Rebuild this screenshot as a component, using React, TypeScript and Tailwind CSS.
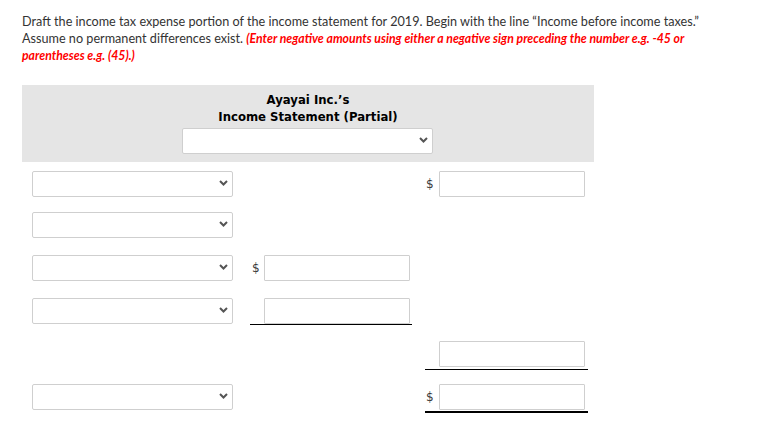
import React from "react";

function Chevron() {
  return (
    <svg width="9" height="6" viewBox="0 0 9 6" className="absolute right-[4px] top-[8px]">
      <polyline points="1,1 4.5,4.5 8,1" fill="none" stroke="#555" strokeWidth="2" />
    </svg>
  );
}

function Select({ w }: { w: string }) {
  return (
    <div className={`relative ${w} h-[26px] border border-[#cfcfcf] bg-white rounded-[2px]`}>
      <Chevron />
    </div>
  );
}

function Input() {
  return <div className="w-[146px] h-[26px] border border-[#cfcfcf] bg-white rounded-[1px]" />;
}

function Dollar({ w }: { w: string }) {
  return (
    <span className={`${w} text-[12px] leading-[26px] text-[#3a3a3a]`} style={{ fontFamily: '"DejaVu Sans", sans-serif' }}>
      $
    </span>
  );
}

export default function App() {
  return (
    <div className="w-[758px] h-[441px] bg-white overflow-hidden" style={{ fontFamily: 'Lato, "Open Sans", sans-serif' }}>
      <div className="pl-[22px] pt-[13px] text-[12.65px] leading-[17px] text-[#333] whitespace-nowrap">
        Draft the income tax expense portion of the income statement for 2019. Begin with the line “Income before income taxes.”
        <br />
        Assume no permanent differences exist.{" "}
        <span className="text-[#f00] font-bold italic text-[12.25px]">
          (Enter negative amounts using either a negative sign preceding the number e.g. -45 or
          <br />
          parentheses e.g. (45).)
        </span>
      </div>

      <div className="ml-[22px] mt-[21px] w-[572px]">
        <div
          className="bg-[#e5e5e5] h-[77px] pt-[7px] flex flex-col items-center text-black font-bold text-[11.7px] leading-[17px]"
          style={{ fontFamily: '"DejaVu Sans", sans-serif' }}
        >
          <div>Ayayai Inc.’s</div>
          <div>Income Statement (Partial)</div>
          <div className="mt-[2px] ml-[-1px]">
            <Select w="w-[251px]" />
          </div>
        </div>

        {/* Row 1 */}
        <div className="flex h-[50px] pt-[9px]">
          <div className="w-[228px] pl-[10px]"><Select w="w-[201px]" /></div>
          <div className="w-[164px]" />
          <div className="ml-[11px] w-[163px] flex pl-[1px]"><Dollar w="w-[13px]" /><Input /></div>
        </div>
        {/* Row 2 */}
        <div className="flex h-[43px]">
          <div className="w-[228px] pl-[10px]"><Select w="w-[201px]" /></div>
        </div>
        {/* Row 3 */}
        <div className="flex h-[43px]">
          <div className="w-[228px] pl-[10px]"><Select w="w-[201px]" /></div>
          <div className="w-[162px] flex pl-[2px]"><Dollar w="w-[12px]" /><Input /></div>
        </div>
        {/* Row 4 */}
        <div className="flex h-[43px]">
          <div className="w-[228px] pl-[10px]"><Select w="w-[201px]" /></div>
          <div className="w-[162px] h-[27px] flex pl-[14px] border-b border-black"><Input /></div>
        </div>
        {/* Row 5 */}
        <div className="flex h-[43px]">
          <div className="w-[228px]" />
          <div className="w-[164px]" />
          <div className="ml-[11px] w-[163px] h-[29px] flex pl-[14px] pb-[2px] border-b border-black"><Input /></div>
        </div>
        {/* Row 6 */}
        <div className="flex h-[44px]">
          <div className="w-[228px] pl-[10px]"><Select w="w-[201px]" /></div>
          <div className="w-[164px]" />
          <div className="ml-[11px] w-[163px] h-[29px] flex pl-[1px] pb-[1px] border-b-2 border-black"><Dollar w="w-[13px]" /><Input /></div>
        </div>
      </div>
    </div>
  );
}
